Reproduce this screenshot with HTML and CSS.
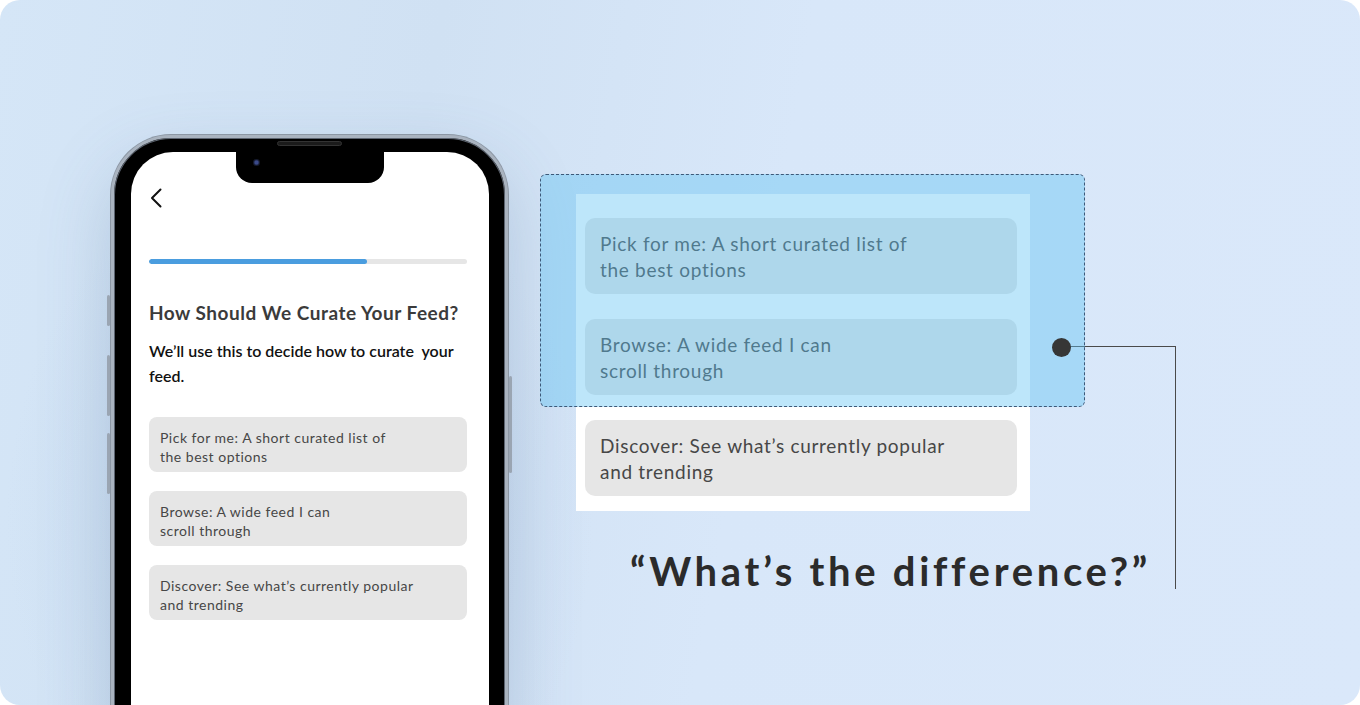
FILE: index.html
```html
<!DOCTYPE html>
<html lang="en">
<head>
  <meta charset="UTF-8" />
  <meta name="viewport" content="width=device-width, initial-scale=1.0"/>
  <title>Feed Curation Question</title>
  <link rel="stylesheet" href="styles.css">
</head>

<body>

<div class="card">

  <!-- phone mockup -->
  <div class="phone">
    <span class="side-btn btn-mute"></span>
    <span class="side-btn btn-vol-up"></span>
    <span class="side-btn btn-vol-down"></span>
    <span class="side-btn btn-power"></span>
    <span class="speaker"></span>

    <div class="screen">
      <div class="notch"><span class="camera"></span></div>

      <div class="app">
        <button class="back" aria-label="Back">
          <svg width="12" height="20" viewBox="0 0 12 20">
            <path d="M10.5 1.5 L2 10 L10.5 18.5" fill="none" stroke="#111" stroke-width="2" stroke-linecap="round" stroke-linejoin="round"/>
          </svg>
        </button>

        <div class="progress"><div class="progress-fill" style="width: 68.6%"></div></div>

        <h1 class="q-title">How Should We Curate Your Feed?</h1>
        <p class="q-sub">We’ll use this to decide how to curate&nbsp; your feed.</p>

        <ul class="options">
          <li class="option">Pick for me: A short curated list of<br>the best options</li>
          <li class="option">Browse: A wide feed I can<br>scroll through</li>
          <li class="option">Discover: See what’s currently popular<br>and trending</li>
        </ul>
      </div>
    </div>
  </div>

  <!-- enlarged options with the confusing pair marked -->
  <div class="callout">
    <div class="panel">
      <ul class="options options-lg">
        <li class="option">Pick for me: A short curated list of<br>the best options</li>
        <li class="option">Browse: A wide feed I can<br>scroll through</li>
        <li class="option">Discover: See what’s currently popular<br>and trending</li>
      </ul>
      <div class="highlight"><span class="dot"></span></div>
      <div class="connector"></div>
    </div>
    <p class="quote">“What’s the difference?”</p>
  </div>

</div>

</body>
</html>
```

FILE: styles.css
```css
html, body {
    margin: 0;
    padding: 0;
    background: #fff;
    font-family: 'Lato', 'Noto Sans', sans-serif;
}

.card {
    width: 1360px;
    height: 705px;
    border-radius: 20px;
    overflow: hidden;
    display: flex;
    align-items: flex-start;
    box-sizing: border-box;
    padding: 135px 0 0 111px;
    background:
        radial-gradient(ellipse 420px 520px at 300px 520px, rgba(170, 195, 225, 0.4), transparent 70%),
        linear-gradient(100deg, #d5e6f7 0%, #d0e1f3 30%, #d8e7f9 55%, #dae8fa 100%);
}

/* ---------- phone ---------- */
.phone {
    position: relative;
    flex: none;
    width: 397px;
    height: 620px;
    box-sizing: border-box;
    padding: 14px 16px 0 17px;
    background: #000;
    border: 3px solid #a9b3bf;
    border-radius: 60px 60px 0 0;
    box-shadow:
        inset 0 0 0 1px #5c6470,
        0 0 0 1px #8c97a4,
        0 30px 70px rgba(80, 110, 150, 0.25);
}
.side-btn {
    position: absolute;
    width: 3px;
    background: #9aa5b2;
    border-radius: 2px;
}
.btn-mute     { left: -7px; top: 157px; height: 31px; }
.btn-vol-up   { left: -7px; top: 217px; height: 61px; }
.btn-vol-down { left: -7px; top: 295px; height: 61px; }
.btn-power    { right: -7px; top: 238px; height: 97px; }

.speaker {
    position: absolute;
    left: 163px;
    top: 3px;
    width: 65px;
    height: 5px;
    border-radius: 3px;
    background: #1b1b1b;
    border: 1px solid #333;
    box-sizing: border-box;
}

.screen {
    position: relative;
    height: 100%;
    background: #fff;
    border-radius: 42px 42px 0 0;
}
.notch {
    position: absolute;
    left: 105px;
    top: 0;
    width: 148px;
    height: 31px;
    background: #000;
    border-radius: 0 0 16px 16px;
}
.camera {
    position: absolute;
    left: 17px;
    top: 7px;
    width: 7px;
    height: 7px;
    border-radius: 50%;
    background: radial-gradient(circle at 50% 50%, #3b4a8a 0 30%, #151a2e 60%);
}

.app {
    padding: 36px 22px 0 18px;
}
.back {
    display: block;
    margin: 0 0 0 1px;
    padding: 0;
    border: none;
    background: none;
    width: 12px;
    height: 20px;
    cursor: pointer;
}
.back svg { display: block; }

.progress {
    margin-top: 51px;
    height: 5px;
    border-radius: 3px;
    background: #e6e6e6;
    overflow: hidden;
}
.progress-fill {
    height: 100%;
    border-radius: 3px;
    background: #4a9ddf;
}

.q-title {
    margin: 37px 0 0 0;
    font-size: 19px;
    line-height: 24px;
    font-weight: 700;
    letter-spacing: 0.5px;
    color: #3b3b3b;
}
.q-sub {
    margin: 13px 0 0 0;
    font-size: 16px;
    line-height: 25px;
    font-weight: 600;
    color: #111;
}

.options {
    list-style: none;
    margin: 29px 0 0 0;
    padding: 0;
    display: flex;
    flex-direction: column;
    gap: 19px;
}
.option {
    background: #e6e6e6;
    border-radius: 8px;
    padding: 11px 11px 6px 11px;
    font-size: 14px;
    line-height: 19px;
    letter-spacing: 0.5px;
    color: #474747;
}

/* ---------- callout ---------- */
.callout {
    flex: none;
    margin: 59px 0 0 68px;
}
.panel {
    position: relative;
    width: 454px;
    box-sizing: border-box;
    padding: 24px 13px 15px 9px;
    background: #fff;
}
.options-lg {
    margin: 0;
    gap: 25px;
}
.options-lg .option {
    border-radius: 10px;
    padding: 13px 15px 11px 15px;
    font-size: 19px;
    line-height: 26px;
    letter-spacing: 0.7px;
}

.highlight {
    position: absolute;
    left: -36px;
    top: -20px;
    width: 545px;
    height: 233px;
    box-sizing: border-box;
    border: 1px dashed #3d5878;
    border-radius: 6px;
    background: rgba(94, 194, 243, 0.41);
    z-index: 2;
}
.dot {
    position: absolute;
    left: 511px;
    top: 163px;
    width: 19px;
    height: 19px;
    border-radius: 50%;
    background: #363636;
}
.connector {
    position: absolute;
    left: 485px;
    top: 152px;
    width: 114px;
    height: 242px;
    border-top: 1.5px solid #4a4a4a;
    border-right: 1.5px solid #4a4a4a;
    z-index: 1;
}

.quote {
    margin: 36px 0 0 54px;
    font-size: 40px;
    line-height: 48px;
    font-weight: 700;
    letter-spacing: 3.7px;
    color: #2b2b2b;
    white-space: nowrap;
}
```
